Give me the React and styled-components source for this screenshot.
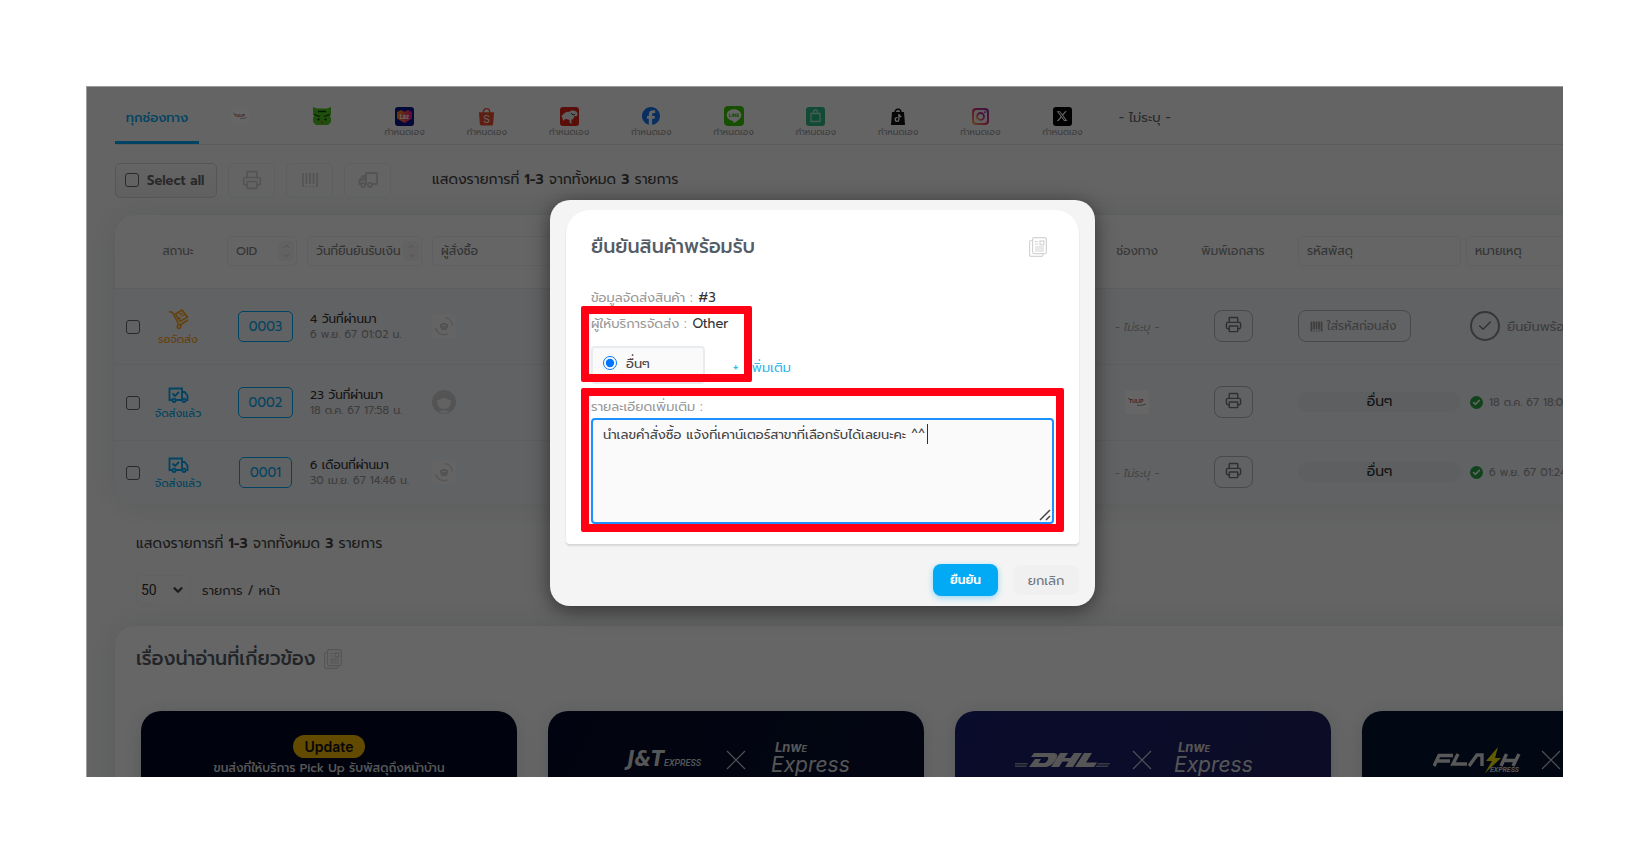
import React from 'react'
import styled, { createGlobalStyle } from 'styled-components'
import { Printer, Check, ChevronUp, ChevronDown } from 'lucide-react'
import { FaFacebook, FaLine, FaTiktok, FaXTwitter } from 'react-icons/fa6'

const channels = [
	{ id: 'tulip', icon: <TulipLogo /> },
	{ id: 'frog', icon: <FrogLogo /> },
	{ id: 'laz', icon: <LazLogo />, custom: true },
	{ id: 'shopee', icon: <ShopeeLogo />, custom: true },
	{ id: 'jd', icon: <JdLogo />, custom: true },
	{ id: 'facebook', icon: <FaFacebook size={18} color="#1877f2" />, custom: true },
	{ id: 'line', icon: <FaLine size={20} color="#3bc500" />, custom: true },
	{ id: 'lineshop', icon: <BagLogo />, custom: true },
	{ id: 'tiktok', icon: <TiktokLogo />, custom: true },
	{ id: 'instagram', icon: <InstagramLogo />, custom: true },
	{ id: 'x', icon: <XLogo />, custom: true },
]

const orders = [
	{ id: '0003', status: 'รอจัดส่ง', ago: '4 วันที่ผ่านมา', date: '6 พ.ย. 67 01:02 น.', avatar: 'shop' },
	{ id: '0002', status: 'จัดส่งแล้ว', sent: true, ago: '23 วันที่ผ่านมา', date: '18 ต.ค. 67 17:58 น.', avatar: 'user', channel: 'tulip', done: '18 ต.ค. 67 18:04 น.' },
	{ id: '0001', status: 'จัดส่งแล้ว', sent: true, ago: '6 เดือนที่ผ่านมา', date: '30 เม.ย. 67 14:46 น.', avatar: 'shop', done: '6 พ.ย. 67 01:24 น.' },
]

function App() {
	return (
		<Page>
			<GlobalStyle />
			<Frame>
				<Content>
					<Tabs />
					<Toolbar />
					<Orders />
					<Pager />
					<Related />
				</Content>
				<Overlay>
					<ConfirmDialog />
				</Overlay>
			</Frame>
		</Page>
	)
}

export default App

function Tabs() {
	return (
		<TabBar>
			<Tab href="#all" $active>ทุกช่องทาง</Tab>
			{channels.map((item) => (
				<Tab href={'#' + item.id} key={item.id} aria-label={item.id} $icon>
					<TabIcon>{item.icon}</TabIcon>
					<TabNote>{item.custom ? 'กำหนดเอง' : ''}</TabNote>
				</Tab>
			))}
			<Tab href="#none">- ไม่ระบุ -</Tab>
		</TabBar>
	)
}

function Toolbar() {
	return (
		<Tools>
			<SelectAll>
				<Tick type="checkbox" />
				Select all
			</SelectAll>
			<ToolButton aria-label="print"><Printer size={20} /></ToolButton>
			<ToolButton aria-label="barcode"><BarsIcon size={18} /></ToolButton>
			<ToolButton aria-label="ship"><TruckIcon /></ToolButton>
			<Summary $left={30}>แสดงรายการที่ <b>1-3</b> จากทั้งหมด <b>3</b> รายการ</Summary>
		</Tools>
	)
}

function Orders() {
	return (
		<Card>
			<Table>
				<colgroup>
					<Col $w={36} />
					<Col $w={71} />
					<Col $w={80} />
					<Col $w={125} />
					<col />
					<Col $w={86} />
					<Col $w={106} />
					<Col $w={175} />
					<Col $w={227} />
				</colgroup>
				<thead>
					<HeadRow>
						<th></th>
						<StatusHead>สถานะ</StatusHead>
						<th><Filter><input aria-label="OID" placeholder="OID" /><Sorter /></Filter></th>
						<th><Filter><input aria-label="วันที่ยืนยันรับเงิน" placeholder="วันที่ยืนยันรับเงิน" /><Sorter /></Filter></th>
						<th><Filter><input aria-label="ผู้สั่งซื้อ" placeholder="ผู้สั่งซื้อ" /></Filter></th>
						<th>ช่องทาง</th>
						<th>พิมพ์เอกสาร</th>
						<TrackHead><Filter><input aria-label="รหัสพัสดุ" placeholder="รหัสพัสดุ" /></Filter></TrackHead>
						<th><Filter><input aria-label="หมายเหตุ" placeholder="หมายเหตุ" /></Filter></th>
					</HeadRow>
				</thead>
				<tbody>
					{orders.map((order, key) => (
						<Row key={order.id} $last={key === orders.length - 1}>
							<td><Tick type="checkbox" aria-label={order.id} /></td>
							<StatusCell>
								<Status $sent={order.sent}>
									{order.sent ? <SentIcon /> : <CartIcon />}
									<span>{order.status}</span>
								</Status>
							</StatusCell>
							<OidCell><OidButton>{order.id}</OidButton></OidCell>
							<DateCell>
								<Ago>{order.ago}</Ago>
								<DateText>{order.date}</DateText>
							</DateCell>
							<BuyerCell><Avatar kind={order.avatar} /></BuyerCell>
							<td>{order.channel ? <TulipLogo big /> : <None>- ไม่ระบุ -</None>}</td>
							<td><PrintButton aria-label="print"><Printer size={17} /></PrintButton></td>
							<TrackCell>
								{order.sent
									? <Carrier>อื่นๆ</Carrier>
									: <CodeButton><BarsIcon size={13} thick />ใส่รหัสก่อนส่ง</CodeButton>}
							</TrackCell>
							<NoteCell>
								{order.sent
									? <Done><Dot><Check size={9} strokeWidth={4} /></Dot>{order.done}</Done>
									: <Ready><Ring><Check size={16} /></Ring>ยืนยันพร้อมรับ</Ready>}
							</NoteCell>
						</Row>
					))}
				</tbody>
			</Table>
		</Card>
	)
}

function Pager() {
	return (
		<PagerBox>
			<Summary>แสดงรายการที่ <b>1-3</b> จากทั้งหมด <b>3</b> รายการ</Summary>
			<PerPage>
				<SelectWrap>
					<select defaultValue="50">
						<option>50</option>
						<option>100</option>
					</select>
					<ChevronDown size={14} strokeWidth={4} />
				</SelectWrap>
				รายการ / หน้า
			</PerPage>
		</PagerBox>
	)
}

function Related() {
	return (
		<RelatedCard>
			<RelatedTitle>เรื่องน่าอ่านที่เกี่ยวข้อง <NewsIcon /></RelatedTitle>
			<Articles>
				<Article href="#pickup" $bg="#000824" $column>
					<Badge>Update</Badge>
					<ArticleText>ขนส่งที่ให้บริการ Pick Up รับพัสดุถึงหน้าบ้าน</ArticleText>
				</Article>
				<Article href="#jt" $bg="linear-gradient(120deg, #040b28, #0a1230)" $gap={25}>
					<Brand $w={81}><JtMark><b>J&amp;T</b>EXPRESS</JtMark></Brand>
					<Cross />
					<LnwExpress />
				</Article>
				<Article href="#dhl" $bg="linear-gradient(120deg, #1a206c, #20205e)" $gap={22} $right={16}>
					<Brand $w={95} $top={11}><DhlMark /></Brand>
					<Cross />
					<LnwExpress />
				</Article>
				<Article href="#flash" $bg="#051232" $gap={20} $right={6}>
					<Brand $w={88} $top={6}><FlashMark /></Brand>
					<Cross />
					<LnwExpress />
				</Article>
			</Articles>
		</RelatedCard>
	)
}

function LnwExpress() {
	return (
		<Lnw>
			<small>Lnw<i>E</i></small>
			<span>Express</span>
		</Lnw>
	)
}

function ConfirmDialog() {
	return (
		<Dialog role="dialog" aria-labelledby="dialog-title">
			<Panel>
				<DialogHead>
					<h2 id="dialog-title">ยืนยันสินค้าพร้อมรับ</h2>
					<NewsIcon />
				</DialogHead>
				<Info>ข้อมูลจัดส่งสินค้า : <span>#3</span></Info>
				<Group>
					<Info>ผู้ให้บริการจัดส่ง : <span>Other</span></Info>
					<Providers>
						<Provider>
							<input type="radio" name="provider" defaultChecked />
							อื่นๆ
						</Provider>
						<MoreLink href="#more">+&nbsp; เพิ่มเติม</MoreLink>
					</Providers>
					<ProviderMark />
				</Group>
				<Group $top={12}>
					<DetailLabel htmlFor="detail">รายละเอียดเพิ่มเติม :</DetailLabel>
					<Detail id="detail" defaultValue="นำเลขคำสั่งซื้อ แจ้งที่เคาน์เตอร์สาขาที่เลือกรับได้เลยนะคะ ^^" />
					<Caret />
					<Grip viewBox="0 0 12 12"><path d="M1 11L11 1M7 11l4-4" /></Grip>
					<DetailMark />
				</Group>
			</Panel>
			<DialogFoot>
				<Confirm>ยืนยัน</Confirm>
				<Cancel>ยกเลิก</Cancel>
			</DialogFoot>
		</Dialog>
	)
}

function Sorter() {
	return (
		<SortBox>
			<ChevronUp size={9} />
			<ChevronDown size={9} />
		</SortBox>
	)
}

function Avatar({ kind }) {
	if (kind === 'user') {
		return (
			<svg width="24" height="24" viewBox="0 0 24 24">
				<circle cx="12" cy="12" r="12" fill="#d2d2d2" />
				<path d="M5 10c4 0 4-2 7-2s3 2 7 2c0 6-3 9-7 9s-7-3-7-9z" fill="#f4f4f4" />
				<path d="M7 22c1-1.5 3-1.5 5-1.5s4 0 5 1.5c-3 1.3-7 1.3-10 0z" fill="#f4f4f4" />
			</svg>
		)
	}
	return (
		<svg width="24" height="24" viewBox="0 0 24 24">
			<rect width="24" height="24" rx="4" fill="#fafafa" />
			<g fill="none" stroke="#d8d8d8" strokeWidth="1.5">
				<path d="M13 3.5a9 9 0 0 1 7.5 8M3.5 14a9 9 0 0 0 12 6" />
				<path d="M8 11.5l4-2 4 2M8 13h8M9 15h6" stroke="#c4c4c4" />
			</g>
		</svg>
	)
}

function NewsIcon() {
	return (
		<svg width="18" height="20" viewBox="0 0 18 20" fill="none" stroke="#d2d4d6" strokeWidth="1.2">
			<rect x="3.6" y=".6" width="13.8" height="16" rx="1.5" />
			<path d="M3.6 3.5H2A1.4 1.4 0 0 0 .6 4.9V18a1.4 1.4 0 0 0 1.4 1.4h10.5a1.4 1.4 0 0 0 1.4-1.4v-1.4" />
			<path d="M6 4.5h3M6 7h3M6 10h9M6 12h9M6 14h9" />
			<rect x="11" y="4" width="3.8" height="3.8" />
		</svg>
	)
}

function BarsIcon({ size, thick }) {
	return (
		<svg width={size} height={size} viewBox="0 0 18 18" stroke="currentColor" strokeWidth={thick ? 2.4 : 1.6}>
			<path d="M2 2v14M5.5 2v11M9 2v11M12.5 2v11M16 2v14M5.5 15v1M9 15v1M12.5 15v1" />
		</svg>
	)
}

function TruckIcon() {
	return (
		<svg width="20" height="18" viewBox="0 0 20 18" fill="none" stroke="currentColor" strokeWidth="1.8">
			<path d="M8 13h1.5M14.5 13H18a1 1 0 0 0 1-1V3a1 1 0 0 0-1-1H9a1 1 0 0 0-1 1v10M8 5H5L1.5 9v4H3" />
			<path d="M2 9h4V6" />
			<circle cx="5" cy="14" r="2" />
			<circle cx="12" cy="14" r="2" />
		</svg>
	)
}

function SentIcon() {
	return (
		<svg width="21" height="16" viewBox="0 0 21 16" fill="none" stroke="currentColor" strokeWidth="1.8">
			<path d="M4 13H1.5V1.5H14V13H8M14 5h2.5l3 3.5V13h-1" />
			<path d="M4.5 6.5L7 9l4-4" />
			<circle cx="6" cy="13.3" r="1.7" />
			<circle cx="16" cy="13.3" r="1.7" />
		</svg>
	)
}

function CartIcon() {
	return (
		<svg width="21" height="20" viewBox="0 0 21 20" fill="none" stroke="currentColor" strokeWidth="1.6">
			<path d="M1 2.5l3.5 1 6 11.5M12 16l8-5" />
			<path d="M7.5 5L14 1l5.5 7-7.5 4.5z" />
			<path d="M11 3.5l1.5 2L15 4M10.5 8l2 2M13 7l4-1" strokeWidth="1.2" />
			<circle cx="11" cy="17.5" r="1.8" />
		</svg>
	)
}

function TulipLogo({ big }) {
	const size = big ? 24 : 18
	return (
		<svg width={size} height={size} viewBox="0 0 24 24">
			<rect width="24" height="24" rx="2" fill="#fff" />
			<text x="4" y="13" fontSize="5" fontWeight="700" fontFamily="Inter, sans-serif" fill="#b5486a">TULIP</text>
			<path d="M3 8l3 2M12 15c3 1 6 0 9-1" stroke="#777" strokeWidth=".8" fill="none" />
		</svg>
	)
}

function FrogLogo() {
	return (
		<svg width="18" height="18" viewBox="0 0 18 18">
			<path d="M0 0l4 1.5h10L18 0v7l-1 2 1 2v4l-3 3H3l-3-3v-4l1-2-1-2z" fill="#4fc51e" />
			<path d="M5 4.5h8M1 7.5l6 2M17 7.5l-6 2" stroke="#173d0c" strokeWidth="1.3" />
			<circle cx="5.5" cy="12.5" r="1" fill="#111" />
			<circle cx="12.5" cy="12.5" r="1" fill="#111" />
			<path d="M7.5 14.5h3L9 17z" fill="#e23c3c" />
		</svg>
	)
}

function LazLogo() {
	return (
		<svg width="19" height="19" viewBox="0 0 19 19">
			<defs>
				<linearGradient id="laz">
					<stop offset="0" stopColor="#ff9000" />
					<stop offset="1" stopColor="#f0149b" />
				</linearGradient>
			</defs>
			<rect width="19" height="19" rx="3" fill="#0a148c" />
			<path d="M9.5 16L2 11.5V5l4-2 3.5 1.7L13 3l4 2v6.5z" fill="url(#laz)" />
			<text x="9.5" y="11.5" textAnchor="middle" fontSize="5.5" fontWeight="800" fontFamily="Inter, sans-serif" fill="#fff">Laz</text>
		</svg>
	)
}

function ShopeeLogo() {
	return (
		<svg width="17" height="19" viewBox="0 0 18 19">
			<path d="M5.5 6c0-6.5 7-6.5 7 0" fill="none" stroke="#ee4d2d" strokeWidth="1.4" />
			<path d="M1 5h16l-1 12.5a1.5 1.5 0 0 1-1.5 1.5h-11A1.5 1.5 0 0 1 2 17.5z" fill="#ee4d2d" />
			<text x="9" y="16" textAnchor="middle" fontSize="11" fontFamily="Inter, sans-serif" fill="#fff">S</text>
		</svg>
	)
}

function JdLogo() {
	return (
		<svg width="19" height="19" viewBox="0 0 19 19">
			<rect width="19" height="19" rx="3" fill="#e1251b" />
			<path d="M1.5 9c1.5-1 2-3 5-4l3-.3c1-1.2 4-1.5 5.5-.7 2 .2 2.5 2 2.5 4-.5 1.5-2 1.5-3 1l-1 2.5-2 1.5-.3 2.5 1.3.8h-2.7l-.3-3.3-3-1-2 .5-1 1.5z" fill="#eee" />
			<path d="M11 6l2 2 2-.5" stroke="#333" fill="none" />
		</svg>
	)
}

function BagLogo() {
	return (
		<svg width="19" height="19" viewBox="0 0 19 19">
			<rect width="19" height="19" rx="3" fill="#2eb886" />
			<path d="M5 6.5h9v8H5zM7.5 6.5V5a2 2 0 0 1 4 0v1.5" fill="none" stroke="#a7edcf" strokeWidth="1.3" />
		</svg>
	)
}

function TiktokLogo() {
	return (
		<TiktokBag>
			<svg width="14" height="17" viewBox="0 0 14 17">
				<path d="M4 5c0-5 6-5 6 0" fill="none" stroke="#111" strokeWidth="1.6" />
				<path d="M1 4h12l1 13H0z" fill="#111" />
			</svg>
			<FaTiktok size={8} color="#fff" />
		</TiktokBag>
	)
}

function InstagramLogo() {
	return (
		<svg width="17" height="17" viewBox="0 0 17 17">
			<defs>
				<linearGradient id="insta" x1="0" y1="1" x2="1" y2="0">
					<stop offset="0" stopColor="#fdb449" />
					<stop offset=".5" stopColor="#e1306c" />
					<stop offset="1" stopColor="#8134af" />
				</linearGradient>
			</defs>
			<rect width="17" height="17" rx="4" fill="url(#insta)" />
			<rect x="2" y="2" width="13" height="13" rx="3" fill="#f6eef4" />
			<circle cx="8.5" cy="8.5" r="3.5" fill="none" stroke="url(#insta)" strokeWidth="1.8" />
			<circle cx="12.8" cy="4.2" r="1" fill="#b02ea0" />
		</svg>
	)
}

function XLogo() {
	return (
		<XTile>
			<FaXTwitter size={12} color="#fff" />
		</XTile>
	)
}

function Cross() {
	return (
		<svg width="20" height="20" viewBox="0 0 20 20" stroke="#c9cbd4" strokeWidth="1.2">
			<path d="M1 1l18 18M19 1L1 19" />
		</svg>
	)
}

function DhlMark() {
	return (
		<svg width="95" height="16" viewBox="0 0 95 16" fill="#d8d8d8">
			<path d="M0 11h13l-.8 1.5H0zM0 13.5h12l-.8 1.5H0z" opacity=".6" />
			<path d="M19 1h19c5 0 5 3 3 6s-5 8-11 8H14l6-8h6l-2.5 4H29c3 0 6-6 3-6H16z" />
			<path d="M45 1h8l-3.5 5h6L59 1h8l-9 14h-8l3.5-5.5h-6L44 15h-8z" />
			<path d="M69 1h8l-6 9.5h11L79 15H60z" />
			<path d="M83 11h12l-.8 1.5H82zM81.5 13.5h12l-.8 1.5H80.5z" opacity=".6" />
		</svg>
	)
}

function FlashMark() {
	return (
		<svg width="88" height="26" viewBox="0 0 88 26">
			<g fill="none" stroke="#dcdcdc" strokeWidth="3.4">
				<path d="M1 19L6 8.5h14M4 14h13M25 7l-5 10h14M36 19l8-11h5v11" />
				<path d="M68 19l5.5-12M80 19l6-12M70 13.5h13" />
			</g>
			<path d="M65 0L53 14h6l-7 12 16-15h-6z" fill="#f4e400" />
			<text x="57" y="25" fontSize="7" fontWeight="700" fontStyle="italic" fontFamily="Roboto, sans-serif" fill="#d8d8d8">EXPRESS</text>
		</svg>
	)
}

const GlobalStyle = createGlobalStyle`
	* {
		box-sizing: border-box;
	}
	body {
		margin: 0;
		background: #fff;
		color: #444;
		font-family: Prompt, Kanit, Inter, "Noto Sans Thai", "Noto Sans", sans-serif;
		font-size: 14px;
	}
	button, input, select, textarea {
		font-family: inherit;
		font-weight: inherit;
	}
	a {
		text-decoration: none;
	}
	svg {
		flex-shrink: 0;
		vertical-align: middle;
	}
`;

const Page = styled.div`
	display: flex;
	height: 100vh;
	padding: 86px 87px 87px 86px;
`;

const Frame = styled.div`
	position: relative;
	flex: 1;
	min-width: 0;
	overflow: hidden;
	background: #fafafa;
`;

const Content = styled.div`
	padding-left: 29px;
`;

const Overlay = styled.div`
	position: absolute;
	inset: 0;
	display: flex;
	justify-content: center;
	align-items: flex-start;
	padding: 113px 5px 0 0;
	background: rgba(0, 0, 0, .6);
	border: solid #9a9c9a;
	border-width: 1px 0 0 1px;
`;

const TabBar = styled.nav`
	display: flex;
	height: 59px;
	border-bottom: 1px solid #e4e6e8;
`;

const Tab = styled.a`
	display: flex;
	flex-direction: column;
	justify-content: center;
	align-items: center;
	flex: 0 0 ${(props) => (props.$active ? '84px' : '5.68%')};
	padding-top: ${(props) => (props.$icon ? 17 : 8)}px;
	color: ${(props) => (props.$active ? '#02a9f4' : '#666')};
	font-size: 13px;
	font-weight: ${(props) => (props.$active ? 500 : 400)};
	white-space: nowrap;
	border-bottom: 3px solid ${(props) => (props.$active ? '#02a9f4' : 'transparent')};
`;

const TabIcon = styled.span`
	display: flex;
	align-items: center;
	height: 20px;
`;

const TabNote = styled.span`
	height: 12px;
	color: #999;
	font-size: 9px;
	line-height: 12px;
`;

const XTile = styled.span`
	display: flex;
	justify-content: center;
	align-items: center;
	width: 19px;
	height: 19px;
	border-radius: 3px;
	background: #000;
`;

const TiktokBag = styled.span`
	display: grid;
	place-items: center;
	> * {
		grid-area: 1 / 1;
	}
	> :last-child {
		margin-top: 4px;
	}
`;

const Tools = styled.div`
	display: flex;
	align-items: center;
	gap: 11px;
	height: 70px;
`;

const SelectAll = styled.label`
	display: flex;
	align-items: center;
	gap: 8px;
	width: 102px;
	height: 35px;
	padding-left: 9px;
	border: 1px solid #d6d8da;
	border-radius: 5px;
	background: linear-gradient(#fafafa, #f0f0f0);
	color: #666;
	font-size: 13px;
	font-weight: 600;
	white-space: nowrap;
`;

const Tick = styled.input`
	appearance: none;
	flex-shrink: 0;
	width: 14px;
	height: 14px;
	margin: 0;
	border: 1px solid #666;
	border-radius: 3px;
	vertical-align: middle;
`;

const ToolButton = styled.button`
	display: flex;
	justify-content: center;
	align-items: center;
	width: 47px;
	height: 35px;
	border: 1px solid #eceeef;
	border-radius: 5px;
	background: none;
	color: #d0d0d0;
`;

const Summary = styled.div`
	margin-left: ${(props) => props.$left || 0}px;
	color: #444;
	font-size: 14px;
	line-height: 24px;
	white-space: nowrap;
	b {
		font-weight: 600;
	}
`;

const Card = styled.section`
	width: max(100%, 1573px);
	overflow: hidden;
	border-radius: 20px;
	background: #fcfcfc;
	box-shadow: 0 0 30px rgba(90, 120, 140, .16);
`;

const Table = styled.table`
	width: 100%;
	table-layout: fixed;
	border-collapse: collapse;
	th, td {
		padding: 0;
		text-align: center;
	}
`;

const Col = styled.col`
	width: ${(props) => props.$w}px;
`;

const HeadRow = styled.tr`
	height: 73px;
	th {
		padding: 0 5px;
		color: #888;
		font-size: 12px;
		font-weight: 400;
		white-space: nowrap;
	}
`;

const StatusHead = styled.th`
	&&& {
		padding: 0 17px 0 0;
	}
`;

const TrackHead = styled.th`
	&&& {
		padding: 0 0 0 12px;
	}
`;

const Filter = styled.div`
	display: flex;
	align-items: center;
	height: 30px;
	padding: 0 2px 0 8px;
	border: 1px solid #f0f1f2;
	border-radius: 4px;
	input {
		flex: 1;
		width: 0;
		padding: 0;
		border: 0;
		background: none;
		font-size: 12px;
	}
	input::placeholder {
		color: #808080;
	}
`;

const SortBox = styled.span`
	display: flex;
	flex-direction: column;
	align-items: center;
	width: 16px;
	padding: 1px 0;
	border-radius: 4px;
	background: #f6f6f6;
	color: #bbb;
`;

const Row = styled.tr`
	height: ${(props) => (props.$last ? 64 : 76)}px;
	border-top: 1px solid #e8eaec;
	background: #f3f4f7;
`;

const StatusCell = styled.td`
	&& {
		padding-right: 17px;
	}
`;

const Status = styled.div`
	display: flex;
	flex-direction: column;
	align-items: center;
	gap: 3px;
	padding-top: 4px;
	color: ${(props) => (props.$sent ? '#02a9f4' : '#f9a31a')};
	font-size: 11px;
	line-height: 16px;
	white-space: nowrap;
`;

const OidCell = styled.td`
	&& {
		padding-left: 7px;
	}
`;

const OidButton = styled.button`
	height: 31px;
	padding: 0 10px;
	border: 1px solid #02a9f4;
	border-radius: 5px;
	background: none;
	color: #02a9f4;
	font-size: 13px;
`;

const DateCell = styled.td`
	&& {
		padding: 2px 0 0 8px;
		text-align: left;
		white-space: nowrap;
	}
`;

const Ago = styled.div`
	color: #333;
	font-size: 12px;
	line-height: 15px;
`;

const DateText = styled.div`
	color: #999;
	font-size: 11px;
	line-height: 15px;
`;

const BuyerCell = styled.td`
	&& {
		padding-left: 5px;
		text-align: left;
	}
`;

const None = styled.i`
	color: #aaa;
	font-size: 11px;
`;

const PrintButton = styled.button`
	display: inline-flex;
	justify-content: center;
	align-items: center;
	width: 39px;
	height: 32px;
	padding: 0 0 4px;
	border: 1px solid #b4b6b8;
	border-radius: 8px;
	background: none;
	color: #777;
	vertical-align: middle;
`;

const TrackCell = styled.td`
	&& {
		padding-left: 12px;
		text-align: left;
	}
`;

const CodeButton = styled.button`
	display: flex;
	align-items: center;
	gap: 4px;
	height: 32px;
	padding: 0 14px 0 11px;
	border: 1px solid #b4b6b8;
	border-radius: 8px;
	background: none;
	color: #999;
	font-size: 12px;
	white-space: nowrap;
`;

const Carrier = styled.div`
	border-radius: 10px;
	background: #eceeef;
	color: #333;
	font-size: 14px;
	line-height: 20px;
	text-align: center;
`;

const NoteCell = styled.td`
	&& {
		padding-left: 9px;
		white-space: nowrap;
	}
`;

const Done = styled.div`
	display: flex;
	align-items: center;
	gap: 6px;
	color: #999;
	font-size: 11px;
`;

const Dot = styled.span`
	display: flex;
	justify-content: center;
	align-items: center;
	width: 13px;
	height: 13px;
	border-radius: 50%;
	background: #28a745;
	color: #fff;
`;

const Ready = styled.div`
	display: flex;
	align-items: center;
	gap: 7px;
	color: #999;
	font-size: 13px;
`;

const Ring = styled.span`
	display: flex;
	justify-content: center;
	align-items: center;
	width: 30px;
	height: 30px;
	border: 2px solid #888;
	border-radius: 50%;
	color: #777;
`;

const PagerBox = styled.div`
	padding: 28px 0 21px 21px;
`;

const PerPage = styled.label`
	display: flex;
	align-items: center;
	gap: 11px;
	margin-top: 19px;
	font-size: 13px;
`;

const SelectWrap = styled.span`
	display: grid;
	align-items: center;
	width: 55px;
	height: 30px;
	border: 1px solid #f0f2f2;
	border-radius: 4px;
	> * {
		grid-area: 1 / 1;
	}
	select {
		appearance: none;
		width: 100%;
		padding: 0 4px;
		border: 0;
		background: none;
		color: #333;
		font-family: Roboto, sans-serif;
		font-size: 14px;
	}
	svg {
		justify-self: end;
		margin-right: 5px;
		pointer-events: none;
	}
`;

const RelatedCard = styled.section`
	width: max(100%, 1680px);
	min-height: 240px;
	padding: 18px 26px;
	border-radius: 20px;
	background: #fff;
	box-shadow: 0 0 30px rgba(90, 120, 140, .16);
`;

const RelatedTitle = styled.h3`
	display: flex;
	align-items: center;
	gap: 8px;
	margin: 0 0 38px -5px;
	color: #545c66;
	font-size: 19px;
	font-weight: 500;
	line-height: 29px;
`;

const Articles = styled.div`
	display: flex;
	gap: 31px;
`;

const Article = styled.a`
	display: flex;
	flex-direction: ${(props) => (props.$column ? 'column' : 'row')};
	justify-content: ${(props) => (props.$column ? 'flex-start' : 'center')};
	align-items: ${(props) => (props.$column ? 'center' : 'flex-start')};
	gap: ${(props) => props.$gap || 0}px;
	flex: 0 0 376px;
	height: 196px;
	padding-top: ${(props) => (props.$column ? 24 : 30)}px;
	padding-right: ${(props) => props.$right || 0}px;
	border-radius: 20px;
	background: ${(props) => props.$bg};
	box-shadow: 0 4px 20px rgba(60, 80, 100, .2);
	color: #d8d8d8;
	> svg {
		margin-top: 9px;
	}
`;

const Badge = styled.span`
	padding: 0 12px;
	border-radius: 12px;
	background: #f5b800;
	color: #111;
	font-family: Inter, sans-serif;
	font-size: 14px;
	font-weight: 600;
	line-height: 23px;
`;

const ArticleText = styled.span`
	font-size: 12px;
	font-weight: 500;
	line-height: 20px;
	white-space: nowrap;
`;

const Brand = styled.span`
	display: flex;
	justify-content: flex-end;
	width: ${(props) => props.$w}px;
	padding-top: ${(props) => props.$top || 8}px;
`;

const JtMark = styled.span`
	display: flex;
	align-items: baseline;
	font-family: Roboto, sans-serif;
	font-size: 9px;
	font-style: italic;
	font-weight: 500;
	line-height: 20px;
	b {
		font-family: "DejaVu Sans Condensed", "DejaVu Sans", sans-serif;
		font-size: 21px;
	}
`;

const Lnw = styled.span`
	display: flex;
	flex-direction: column;
	width: 81px;
	font-family: Inter, sans-serif;
	font-style: italic;
	small {
		padding-left: 4px;
		font-size: 13px;
		font-weight: 700;
		line-height: 12px;
	}
	i {
		font-size: 9px;
	}
	span {
		font-size: 21px;
		line-height: 20px;
	}
`;

const Dialog = styled.div`
	width: 545px;
	padding: 10px 16px;
	border-radius: 20px;
	background: #f4f4f4;
	box-shadow: 0 4px 20px rgba(0, 0, 0, .5);
`;

const Panel = styled.div`
	padding: 23px 25px 20px;
	border-radius: 24px 24px 4px 4px;
	background: #fff;
	box-shadow: 0 2px 2px rgba(0, 0, 0, .12);
`;

const DialogHead = styled.div`
	display: flex;
	justify-content: space-between;
	align-items: center;
	margin-bottom: 24px;
	padding-right: 7px;
	h2 {
		margin: 0;
		color: #545c66;
		font-size: 19px;
		font-weight: 500;
		line-height: 28px;
	}
`;

const Info = styled.div`
	color: #999;
	font-size: 13px;
	line-height: 26px;
	span {
		padding-left: 1px;
		color: #333;
	}
`;

const Group = styled.div`
	position: relative;
	margin-top: ${(props) => props.$top || 0}px;
`;

const Providers = styled.div`
	display: flex;
	align-items: center;
	gap: 28px;
	margin-top: 9px;
`;

const Provider = styled.label`
	display: flex;
	align-items: center;
	gap: 9px;
	width: 114px;
	height: 38px;
	padding: 0 0 4px 10px;
	border: 2px solid #e9ecef;
	border-radius: 4px;
	background: #fafafa;
	color: #444;
	font-size: 13px;
	input {
		width: 14px;
		height: 14px;
		margin: 0;
		accent-color: #0075ff;
	}
`;

const MoreLink = styled.a`
	padding-top: 4px;
	color: #35b5ea;
	font-size: 13px;
`;

const DetailLabel = styled.label`
	display: block;
	color: #999;
	font-size: 13px;
	line-height: 22px;
`;

const Detail = styled.textarea`
	display: block;
	width: 100%;
	height: 106px;
	padding: 4px 10px;
	border: 2px solid #1e90ff;
	border-radius: 4px;
	outline: 0;
	background: #fafafa;
	color: #444;
	font-size: 13px;
	line-height: 22px;
`;

const Caret = styled.span`
	position: absolute;
	top: 28px;
	left: 336px;
	width: 1px;
	height: 20px;
	background: #333;
`;

const Grip = styled.svg`
	position: absolute;
	right: 3px;
	bottom: 3px;
	width: 12px;
	height: 12px;
	background: #fafafa;
	stroke: #444;
	stroke-width: 1.5;
	pointer-events: none;
`;

const Mark = styled.div`
	position: absolute;
	border: 8px solid #ff0014;
	border-radius: 2px;
	pointer-events: none;
`;

const ProviderMark = styled(Mark)`
	top: -5px;
	left: -10px;
	width: 171px;
	bottom: 2px;
`;

const DetailMark = styled(Mark)`
	inset: -8px -10px -8px -10px;
`;

const DialogFoot = styled.div`
	display: flex;
	justify-content: flex-end;
	align-items: center;
	gap: 15px;
	padding-top: 20px;
`;

const Confirm = styled.button`
	width: 65px;
	height: 32px;
	border: 0;
	border-radius: 8px;
	background: #02a9f4;
	box-shadow: 0 2px 6px rgba(2, 169, 244, .4);
	color: #fff;
	font-size: 12px;
	font-weight: 600;
`;

const Cancel = styled(Confirm)`
	width: 66px;
	height: 30px;
	background: #f0f0f0;
	box-shadow: none;
	color: #6c757d;
	font-size: 13px;
	font-weight: 400;
`;
